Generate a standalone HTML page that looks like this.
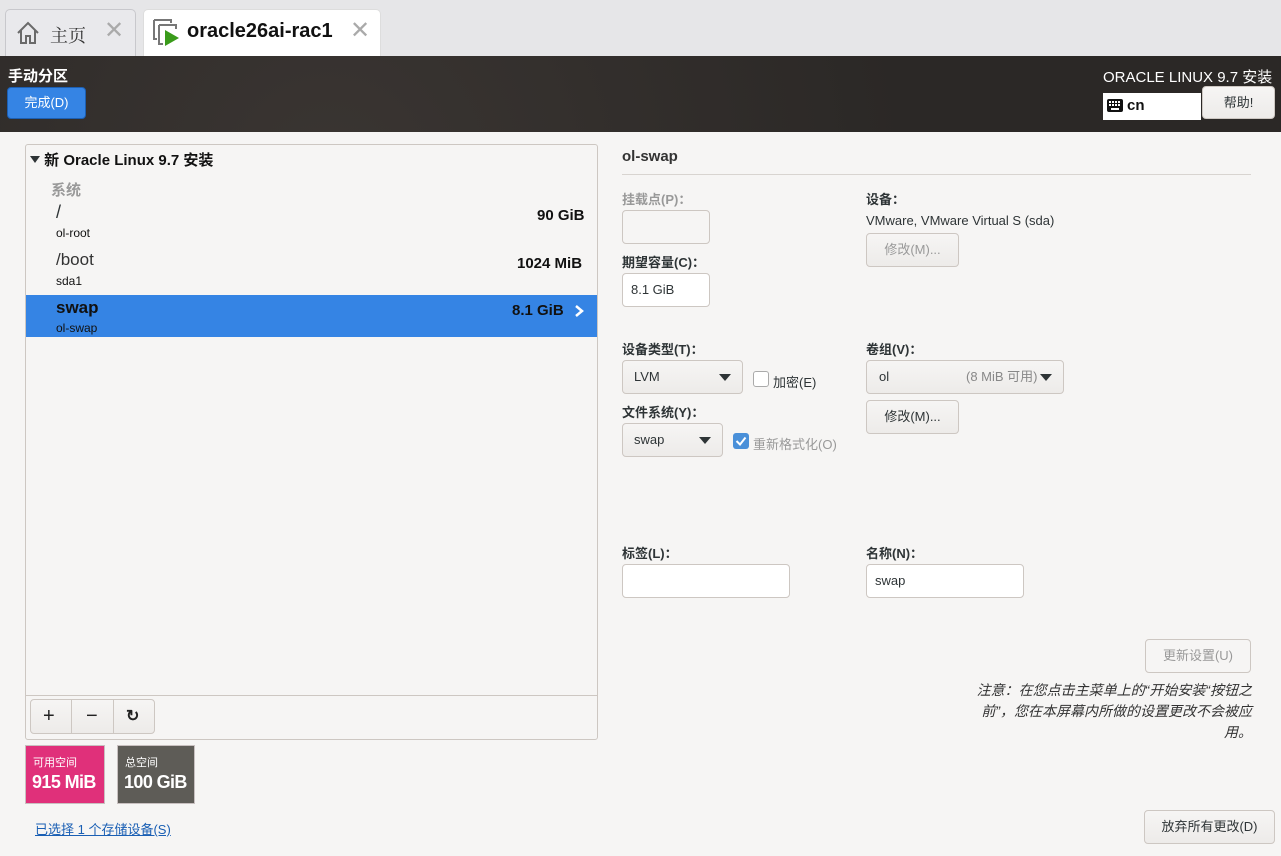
<!DOCTYPE html>
<html><head><meta charset="utf-8"><style>
*{box-sizing:border-box;margin:0;padding:0}
body{width:1281px;height:856px;overflow:hidden;background:#f6f5f4;font-family:"Liberation Sans","Noto Sans CJK SC",sans-serif;font-size:13px;color:#2e3436;position:relative}
.a{position:absolute}
.btn{position:absolute;border:1px solid #cdc7c2;border-radius:4px;background:linear-gradient(#f6f5f4,#edebe9);text-align:center;font-size:13px;color:#2e3436}
.entry{position:absolute;border:1px solid #cdc7c2;border-radius:4px;background:#fff;font-size:13px;padding-left:8px}
.lbl{position:absolute;font-size:13px;font-weight:bold;color:#2e3436}
.tri{display:inline-block;width:0;height:0;border-left:6px solid transparent;border-right:6px solid transparent;border-top:7px solid #2e3436}
</style></head><body>
<div class="a" style="left:0;top:0;width:1281px;height:56px;background:#e6e6e8"></div>
<div class="a" style="left:5px;top:9px;width:131px;height:47px;background:#e9e9ec;border:1px solid #c8c8cc;border-bottom:none;border-radius:5px 5px 0 0"></div>
<svg class="a" style="left:15px;top:20px" width="26" height="26" viewBox="0 0 26 26"><path d="M3 13 L13 3 L23 13 M6 10 V23 H11 V16 H15 V23 H20 V10" fill="none" stroke="#6a6a6a" stroke-width="2"/></svg>
<div class="a" style="left:50px;top:22px;font-size:18px;color:#333;font-family:'Noto Serif CJK SC',serif">主页</div>
<div class="a" style="left:104px;top:16px;font-size:24px;color:#aaa">✕</div>
<div class="a" style="left:143px;top:9px;width:238px;height:47px;background:#fff;border-radius:5px 5px 0 0;border:1px solid #ddd;border-bottom:none"></div>
<svg class="a" style="left:153px;top:19px" width="30" height="28" viewBox="0 0 30 28"><path d="M1 1 H18 V4 M1 1 V20 H4" fill="none" stroke="#777" stroke-width="2"/><path d="M6 6 H23 V10 M6 6 V25 H10" fill="none" stroke="#777" stroke-width="2"/><path d="M12 11 L26 19 L12 27Z" fill="#3a9b1a"/></svg>
<div class="a" style="left:187px;top:20px;font-size:20px;font-weight:bold;color:#111">oracle26ai-rac1</div>
<div class="a" style="left:350px;top:16px;font-size:24px;color:#aaa">✕</div>
<div class="a" style="left:0;top:56px;width:1281px;height:76px;background:radial-gradient(circle at 330px 120px,#3a3532,#2b2826 60%)"></div>
<div class="a" style="left:8px;top:65px;color:#fff;font-weight:bold;font-size:15px">手动分区</div>
<div class="a" style="left:7px;top:87px;width:79px;height:32px;background:#3584e4;border:1px solid #1c5fb3;border-radius:4px;color:#fff;text-align:center;line-height:30px">完成(D)</div>
<div class="a" style="left:1103px;top:66px;color:#fff;font-size:15px">ORACLE LINUX 9.7 安装</div>
<div class="a" style="left:1103px;top:93px;width:98px;height:27px;background:#fff"></div>
<svg class="a" style="left:1107px;top:99px" width="16" height="13" viewBox="0 0 16 13"><rect x="0" y="0" width="16" height="13" rx="2" fill="#111"/><g fill="#fff"><rect x="2" y="2" width="2" height="2"/><rect x="5" y="2" width="2" height="2"/><rect x="8" y="2" width="2" height="2"/><rect x="11" y="2" width="2" height="2"/><rect x="2" y="5" width="2" height="2"/><rect x="5" y="5" width="2" height="2"/><rect x="8" y="5" width="2" height="2"/><rect x="11" y="5" width="2" height="2"/><rect x="4" y="9" width="8" height="2"/></g></svg>
<div class="a" style="left:1127px;top:97px;font-size:15px;font-weight:bold;color:#111">cn</div>
<div class="btn" style="left:1202px;top:86px;width:73px;height:33px;line-height:31px">帮助!</div>
<div class="a" style="left:25px;top:144px;width:573px;height:596px;border:1px solid #cdc7c2;border-radius:3px;background:#f6f5f4"></div>
<div class="a" style="left:30px;top:149px;font-size:15px;font-weight:bold;color:#111"><span class="tri" style="border-width:7px 5px 0 5px;vertical-align:2px"></span> 新 Oracle Linux 9.7 安装</div>
<div class="a" style="left:51px;top:179px;font-size:15px;font-weight:bold;color:#999">系统</div>
<div class="a" style="left:56px;top:202px;font-size:18px">/</div>
<div class="a" style="left:56px;top:226px;font-size:12px;color:#111">ol-root</div>
<div class="a" style="left:537px;top:207px;font-size:15px;font-weight:bold;color:#111">90 GiB</div>
<div class="a" style="left:56px;top:250px;font-size:17px;color:#333">/boot</div>
<div class="a" style="left:56px;top:274px;font-size:12px;color:#111">sda1</div>
<div class="a" style="left:517px;top:255px;font-size:15px;font-weight:bold;color:#111">1024 MiB</div>
<div class="a" style="left:26px;top:295px;width:571px;height:42px;background:#3584e4"></div>
<div class="a" style="left:56px;top:298px;font-size:17px;font-weight:bold;color:#111">swap</div>
<div class="a" style="left:56px;top:321px;font-size:12px;color:#111">ol-swap</div>
<div class="a" style="left:512px;top:302px;font-size:15px;font-weight:bold;color:#111">8.1 GiB</div>
<svg class="a" style="left:574px;top:304px" width="10" height="14"><path d="M2 2 L8 7 L2 12" fill="none" stroke="#fff" stroke-width="2.5"/></svg>
<div class="a" style="left:26px;top:695px;width:571px;height:1px;background:#cdc7c2"></div>
<div class="a" style="left:30px;top:699px;width:125px;height:35px;border:1px solid #cdc7c2;border-radius:4px;background:linear-gradient(#f6f5f4,#edebe9)"></div>
<div class="a" style="left:71px;top:700px;width:1px;height:33px;background:#cdc7c2"></div>
<div class="a" style="left:113px;top:700px;width:1px;height:33px;background:#cdc7c2"></div>
<div class="a" style="left:43px;top:705px;font-size:20px;color:#222">+</div>
<div class="a" style="left:86px;top:705px;font-size:20px;color:#222">−</div>
<div class="a" style="left:126px;top:706px;font-size:16px;font-weight:bold;color:#222">↻</div>
<div class="a" style="left:25px;top:745px;width:80px;height:59px;background:#e0307a;border:1px solid #c8c0c0"></div>
<div class="a" style="left:33px;top:754px;font-size:11px;color:#fff">可用空间</div>
<div class="a" style="left:32px;top:772px;font-size:18px;letter-spacing:-0.6px;font-weight:bold;color:#fff">915 MiB</div>
<div class="a" style="left:117px;top:745px;width:78px;height:59px;background:#5e5c57;border:1px solid #c8c0c0"></div>
<div class="a" style="left:125px;top:754px;font-size:11px;color:#fff">总空间</div>
<div class="a" style="left:124px;top:772px;font-size:18px;letter-spacing:-0.6px;font-weight:bold;color:#fff">100 GiB</div>
<div class="a" style="left:35px;top:819px;color:#1a5fb4;text-decoration:underline">已选择 1 个存储设备(S)</div>
<div class="a" style="left:622px;top:148px;font-size:15px;font-weight:bold;color:#333">ol-swap</div>
<div class="a" style="left:622px;top:174px;width:629px;height:1px;background:#d8d4d0"></div>
<div class="lbl" style="left:622px;top:189px;color:#999">挂载点(P)：</div>
<div class="entry" style="left:622px;top:210px;width:88px;height:34px;background:#f6f5f4"></div>
<div class="lbl" style="left:622px;top:252px">期望容量(C)：</div>
<div class="entry" style="left:622px;top:273px;width:88px;height:34px;line-height:32px">8.1 GiB</div>
<div class="lbl" style="left:866px;top:189px">设备：</div>
<div class="a" style="left:866px;top:213px">VMware, VMware Virtual S (sda)</div>
<div class="btn" style="left:866px;top:233px;width:93px;height:34px;line-height:32px;color:#999">修改(M)...</div>
<div class="lbl" style="left:622px;top:339px">设备类型(T)：</div>
<div class="btn" style="left:622px;top:360px;width:121px;height:34px;line-height:32px;text-align:left;padding-left:11px">LVM<span class="tri" style="position:absolute;left:96px;top:13px"></span></div>
<div class="a" style="left:753px;top:371px;width:16px;height:16px;border:1px solid #aaa;border-radius:3px;background:#fff"></div>
<div class="a" style="left:773px;top:372px">加密(E)</div>
<div class="lbl" style="left:622px;top:402px">文件系统(Y)：</div>
<div class="btn" style="left:622px;top:423px;width:101px;height:34px;line-height:32px;text-align:left;padding-left:11px">swap<span class="tri" style="position:absolute;left:76px;top:13px"></span></div>
<div class="a" style="left:733px;top:433px;width:16px;height:16px;border-radius:3px;background:#4a90d9"></div>
<svg class="a" style="left:733px;top:433px" width="16" height="16"><path d="M3.5 8 L7 11.5 L12.5 4.5" fill="none" stroke="#fff" stroke-width="2"/></svg>
<div class="a" style="left:753px;top:434px;color:#999">重新格式化(O)</div>
<div class="lbl" style="left:866px;top:339px">卷组(V)：</div>
<div class="btn" style="left:866px;top:360px;width:198px;height:34px;line-height:32px;text-align:left;padding-left:12px">ol<span style="position:absolute;left:99px;color:#888">(8 MiB 可用)</span><span class="tri" style="position:absolute;left:173px;top:13px"></span></div>
<div class="btn" style="left:866px;top:400px;width:93px;height:34px;line-height:32px">修改(M)...</div>
<div class="lbl" style="left:622px;top:543px">标签(L)：</div>
<div class="entry" style="left:622px;top:564px;width:168px;height:34px"></div>
<div class="lbl" style="left:866px;top:543px">名称(N)：</div>
<div class="entry" style="left:866px;top:564px;width:158px;height:34px;line-height:32px">swap</div>
<div class="btn" style="left:1145px;top:639px;width:106px;height:34px;line-height:32px;color:#999;background:#f6f5f4">更新设置(U)</div>
<div class="a" style="left:970px;top:680px;width:282px;text-align:right;font-style:italic;font-size:14px;line-height:21px;color:#333">注意：在您点击主菜单上的“开始安装“按钮之<br>前”，您在本屏幕内所做的设置更改不会被应<br>用。</div>
<div class="btn" style="left:1144px;top:810px;width:131px;height:34px;line-height:32px">放弃所有更改(D)</div>
</body></html>
